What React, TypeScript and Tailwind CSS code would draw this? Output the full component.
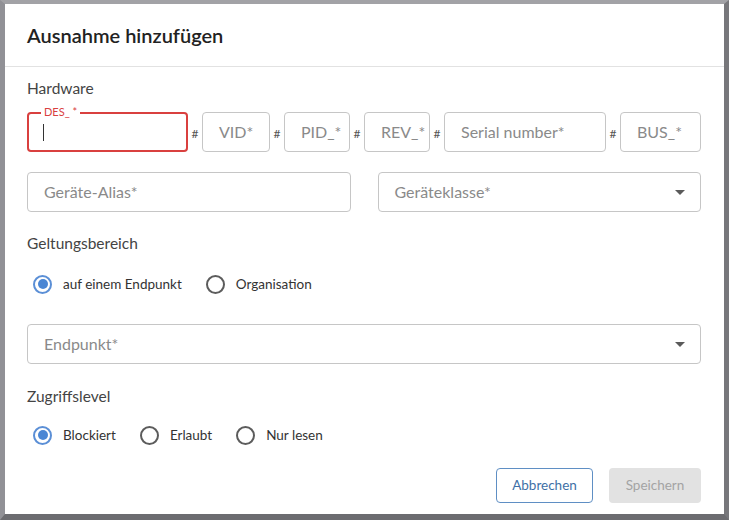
import React from "react";

const font = { fontFamily: "Lato, 'Open Sans', sans-serif" };

function Hash() {
  return (
    <span className="flex w-[14px] shrink-0 items-center justify-center pt-[3px] text-[12px] text-[#555]">
      #
    </span>
  );
}

function Field({ label, width }: { label: string; width: string }) {
  return (
    <div
      className={`${width} flex h-[40px] shrink-0 items-center rounded-[4px] border border-[#c6c6c6] pl-[16px] text-[16px] text-[#8a8a8a]`}
    >
      {label}
    </div>
  );
}

function Caret() {
  return (
    <svg width="10" height="5" viewBox="0 0 10 5" className="shrink-0">
      <path d="M0 0h10L5 5z" fill="#5a5a5a" />
    </svg>
  );
}

function SelectField({ label }: { label: string }) {
  return (
    <div className="flex h-[40px] items-center justify-between rounded-[4px] border border-[#c6c6c6] pl-[16px] pr-[15px] text-[16px] text-[#8a8a8a]">
      <span>{label}</span>
      <Caret />
    </div>
  );
}

function Radio({ label, checked }: { label: string; checked?: boolean }) {
  return (
    <label className="flex items-center gap-[11px] text-[13.5px] text-[#333]">
      <span
        className={`flex h-[19px] w-[19px] items-center justify-center rounded-full border-2 ${
          checked ? "border-[#5b8fd6]" : "border-[#5c5c5c]"
        }`}
      >
        {checked && <span className="h-[10px] w-[10px] rounded-full bg-[#4a86d4]" />}
      </span>
      {label}
    </label>
  );
}

export default function App() {
  return (
    <div
      className="h-[520px] w-[729px] border-b-[6px] border-l-[5px] border-r-[5px] border-t-[4px] border-b-[#6c6c70] border-l-[#919196] border-r-[#77777b] border-t-[#a2a2a6] bg-white"
      style={font}
    >
      <div className="flex h-[63px] items-center border-b border-[#e2e2e2] pl-[22px]">
        <h2 className="text-[20px] font-semibold text-[#222]">Ausnahme hinzufügen</h2>
      </div>

      <div className="pl-[22px] pr-[23px] pt-[11px]">
        <div className="h-[20px] text-[15.5px] leading-[20px] text-[#444]">Hardware</div>

        <div className="mt-[14px] flex">
          <div className="relative flex h-[40px] w-[161px] shrink-0 items-center rounded-[4px] border-2 border-[#d9403f] pl-[14px]">
            <span className="absolute left-[12px] top-[-8px] bg-white px-[3px] text-[11px] leading-[12px] text-[#d9403f]">
              DES_ *
            </span>
            <span className="h-[17px] w-px bg-[#333]" />
          </div>
          <Hash />
          <Field label="VID*" width="w-[68px]" />
          <Hash />
          <Field label="PID_*" width="w-[66px]" />
          <Hash />
          <Field label="REV_*" width="w-[66px]" />
          <Hash />
          <Field label="Serial number*" width="w-[162px]" />
          <Hash />
          <div className="flex-1">
            <Field label="BUS_*" width="w-full" />
          </div>
        </div>

        <div className="mt-[20px] grid grid-cols-2 gap-[27px]">
          <div className="flex h-[40px] items-center rounded-[4px] border border-[#c6c6c6] pl-[16px] text-[16px] text-[#8a8a8a]">
            Geräte-Alias*
          </div>
          <SelectField label="Geräteklasse*" />
        </div>

        <div className="mt-[21px] h-[20px] text-[15.5px] leading-[20px] text-[#444]">Geltungsbereich</div>

        <div className="mt-[21px] flex h-[20px] items-center gap-[24px] pl-[6px]">
          <Radio label="auf einem Endpunkt" checked />
          <Radio label="Organisation" />
        </div>

        <div className="mt-[30px]">
          <SelectField label="Endpunkt*" />
        </div>

        <div className="mt-[22px] h-[20px] text-[15.5px] leading-[20px] text-[#444]">Zugriffslevel</div>

        <div className="mt-[19px] flex h-[20px] items-center gap-[24px] pl-[6px]">
          <Radio label="Blockiert" checked />
          <Radio label="Erlaubt" />
          <Radio label="Nur lesen" />
        </div>

        <div className="mt-[23px] flex justify-end gap-[16px]">
          <button className="h-[35px] w-[97px] rounded-[4px] border border-[#5f8fc4] text-[13.5px] text-[#3e6fa6]">
            Abbrechen
          </button>
          <button className="h-[35px] w-[92px] rounded-[4px] bg-[#e2e2e2] text-[13.5px] text-[#a4a4a4]">
            Speichern
          </button>
        </div>
      </div>
    </div>
  );
}
